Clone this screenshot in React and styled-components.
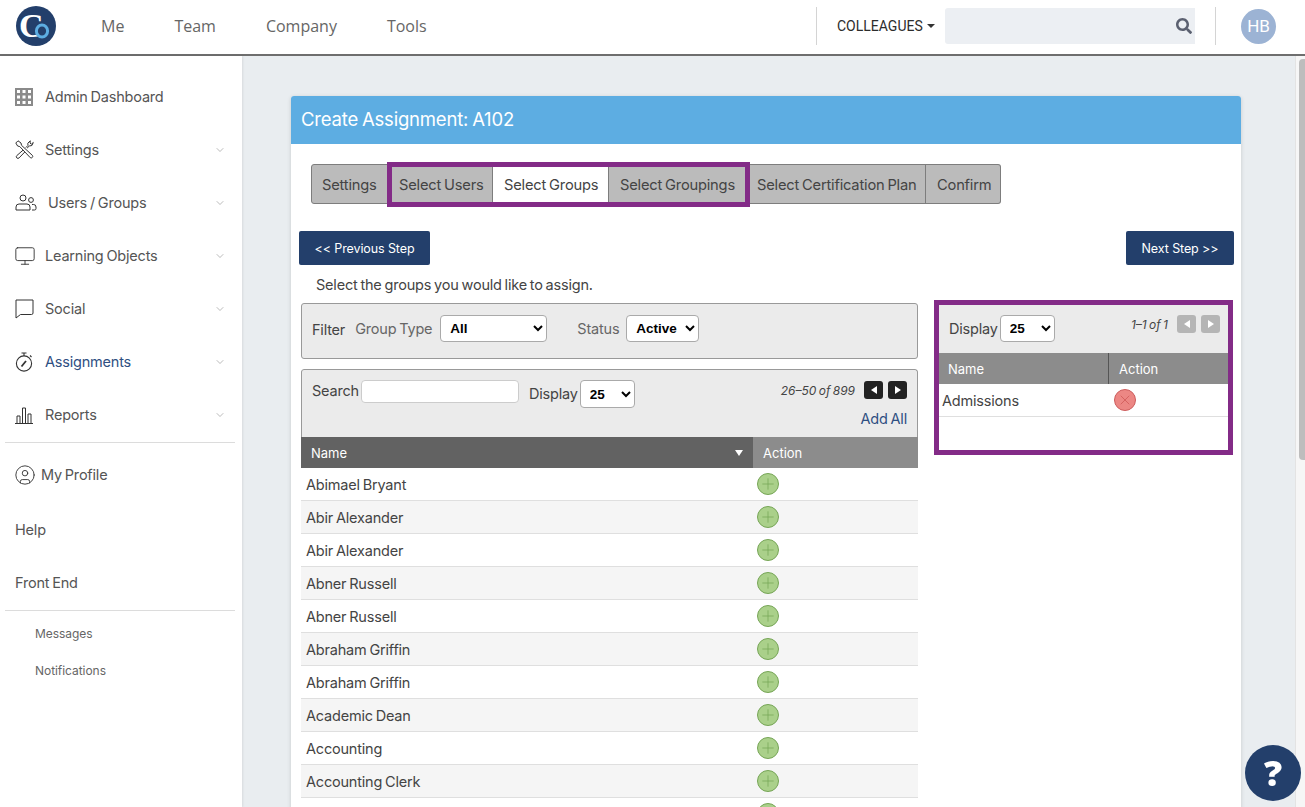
import React from "react";
import styled, { createGlobalStyle } from "styled-components";
import { ChevronDown, CircleUser, Monitor, Plus, X } from "lucide-react";
import { FaSearch } from "react-icons/fa";

const GlobalStyle = createGlobalStyle`
  html, body {
    margin: 0;
    height: 100%;
    overflow: hidden;
    font-family: "Inter", "Liberation Sans", sans-serif;
    letter-spacing: -0.2px;
    word-spacing: -1px;
    color: #333;
  }
  * { box-sizing: border-box; }
`;

const NAVY = "#233f6b";
const PURPLE = "#832b87";

const Logo = () => (
  <svg width="40" height="40" viewBox="0 0 40 40" style={{ letterSpacing: 0 }}>
    <circle cx="20" cy="20" r="20" fill={NAVY} />
    <text x="3" y="31" fontFamily="Liberation Serif" fontWeight="bold" fontSize="34" fill="#fff">C</text>
    <ellipse cx="26" cy="25" rx="5.6" ry="6" fill={NAVY} stroke="#5dade2" strokeWidth="3" />
  </svg>
);

const GridIcon = () => (
  <svg width="18" height="18" viewBox="0 0 18 18" fill="#fff">
    <rect width="18" height="18" fill="#8a8a8a" />
    {[2, 7.5, 13].flatMap((y) =>
      [2, 7.5, 13].map((x) => <rect key={`${x}-${y}`} x={x} y={y} width="3" height="3" />)
    )}
  </svg>
);

const ToolsIcon = () => (
  <svg width="19" height="19" viewBox="0 0 19 19" fill="none" stroke="#333" strokeWidth="1">
    <path d="M.8 3 3 .8 6 3l.5 2.3 11 10.2a1.6 1.6 0 0 1-2.2 2.2L4.8 6.6 2.6 6Z" />
    <path d="M8 10.2 1.8 15.6a1.6 1.6 0 0 0 2.3 2.3L9.8 12" />
    <path d="M10.8 7.6 13 5.4l-.2-2.2L15.3.8 15 3l1.3 1.2 2-1.7-1.4 3-2.6.5-2.2 2.1" />
  </svg>
);

const UsersIcon = () => (
  <svg width="22" height="18" viewBox="0 0 22 18" fill="none" stroke="#333" strokeWidth="1">
    <circle cx="8" cy="4" r="3" />
    <circle cx="16" cy="6" r="2.4" />
    <path d="M1 16v-3a3 3 0 0 1 3-3h8a3 3 0 0 1 3 3v3Z" />
    <path d="M17 10.5h1.5a2.5 2.5 0 0 1 2.5 2.5v1.5a1.5 1.5 0 0 1-1.5 1.5H17" />
  </svg>
);

const BubbleIcon = () => (
  <svg width="19" height="20" viewBox="0 0 19 20" fill="none" stroke="#333" strokeWidth="1">
    <path d="M1 1h17v13a1.5 1.5 0 0 1-1.5 1.5H5.5L1 19Z" />
  </svg>
);

const TimerIcon = () => (
  <svg width="19" height="20" viewBox="0 0 19 20" fill="none" stroke="#333" strokeWidth="1.1">
    <circle cx="9" cy="11.5" r="7.6" />
    <path d="M6.5 1h5M9 1v3M15 3.5l1.5 1.5" />
    <path d="M6.5 14.5 11 9" strokeWidth="1.8" />
  </svg>
);

const BarsIcon = () => (
  <svg width="18" height="18" viewBox="0 0 18 18" fill="none" stroke="#333" strokeWidth="1">
    <path d="M0 17.5h18M2 17V10h3v7M7.5 17V2h3v15M13 17V8h3v9" />
  </svg>
);

const Page = styled.div`
  height: 100vh;
  display: flex;
  flex-direction: column;
  background: #e9edf0;
`;

const TopBar = styled.header`
  height: 56px;
  flex: none;
  display: flex;
  align-items: center;
  background: #fff;
  border-bottom: 2px solid #6e6e6e;
  padding: 0 29px 2px 16px;
`;

const TopNav = styled.nav`
  display: flex;
  gap: 50px;
  margin-left: 45px;
  flex: 1;
`;

const TopLink = styled.a`
  font-family: "Open Sans", sans-serif;
  font-size: 16px;
  letter-spacing: 0;
  word-spacing: 0;
  color: #666;
`;

const Divider = styled.div`
  width: 1px;
  height: 38px;
  background: #d4d4d4;
`;

const Colleagues = styled.div`
  display: flex;
  align-items: center;
  gap: 4px;
  width: 128px;
  padding-left: 20px;
  font-family: "Roboto", sans-serif;
  font-size: 14px;
  letter-spacing: 0;
  color: #2c2c2c;
`;

const Caret = styled.span`
  width: 0;
  height: 0;
  border-left: 4px solid transparent;
  border-right: 4px solid transparent;
  border-top: 4px solid #333;
`;

const SearchBox = styled.div`
  width: 250px;
  height: 36px;
  display: flex;
  align-items: center;
  justify-content: flex-end;
  padding-right: 3px;
  margin-right: 20px;
  background: #eceff3;
  border-radius: 3px 0 0 3px;
  color: #5b6070;
  font-size: 16px;
`;

const Avatar = styled.div`
  width: 35px;
  height: 35px;
  margin-left: 25px;
  border-radius: 50%;
  display: flex;
  align-items: center;
  justify-content: center;
  background: #9cb3d4;
  color: #fff;
  font-family: "Roboto", sans-serif;
  font-size: 17px;
  letter-spacing: 0;
`;

const Body = styled.div`
  flex: 1;
  min-height: 0;
  display: flex;
`;

const Sidebar = styled.aside`
  width: 242px;
  flex: none;
  padding: 14px 7px 0 5px;
  background: #fff;
  box-shadow: 1px 0 2px rgba(0, 0, 0, 0.08);
`;

const SideItem = styled.a`
  height: 53px;
  display: flex;
  align-items: center;
  padding: 0 9px 0 10px;
  font-size: 14.5px;
  color: ${(p) => (p.$active ? "#2f4f82" : "#555")};
`;

const SideIcon = styled.span`
  width: ${(p) => p.$w || 30}px;
  display: flex;
  align-items: center;
  margin-left: ${(p) => p.$ml || 0}px;
`;

const SideLabel = styled.span`
  flex: 1;
`;

const SideRule = styled.hr`
  margin: 1px 0 0;
  border: 0;
  border-top: 1px solid #dcdcdc;
`;

const SideSmall = styled.a`
  height: 37px;
  display: flex;
  align-items: center;
  padding-left: 30px;
  font-size: 12px;
  color: #666;
  letter-spacing: -0.05px;
`;

const Main = styled.main`
  flex: 1;
  min-width: 0;
  overflow: hidden;
  padding: 40px 54px 0 49px;
`;

const Card = styled.section`
  background: #fff;
  border-radius: 3px 3px 0 0;
  box-shadow: 0 1px 4px rgba(0, 0, 0, 0.15);
`;

const CardHead = styled.h1`
  height: 48px;
  margin: 0;
  padding: 0 0 2px 10px;
  display: flex;
  align-items: center;
  background: #5dade2;
  border-radius: 3px 3px 0 0;
  color: #fff;
  font-size: 18.5px;
  font-weight: 400;
`;

const CardBody = styled.div`
  padding: 20px 7px 0 8px;
`;

const Tabs = styled.div`
  display: flex;
  width: fit-content;
  margin-left: 12px;
  height: 40px;
`;

const Tab = styled.a`
  display: flex;
  align-items: center;
  width: ${(p) => p.$w}px;
  padding: 2px 0 0 ${(p) => p.$pad || 11}px;
  font-size: 14.7px;
  color: #444;
  white-space: nowrap;
  background: ${(p) => (p.$current ? "#fff" : "#bbb")};
  border: 1px solid #7d7d7d;
  border-left-width: ${(p) => (p.$first ? 1 : 0)}px;
  border-radius: ${(p) => p.$radius || 0};
`;

const TabHighlight = styled.div`
  position: relative;
  display: flex;

  &::after {
    content: "";
    position: absolute;
    left: -1px;
    right: -1px;
    top: -2px;
    bottom: -3px;
    border: 5px solid ${PURPLE};
    pointer-events: none;
  }
`;

const StepRow = styled.div`
  display: flex;
  justify-content: space-between;
  margin-top: 27px;
`;

const StepButton = styled.button`
  height: 34px;
  width: ${(p) => p.$w}px;
  border: 0;
  border-radius: 2px;
  background: ${NAVY};
  color: #fff;
  font-family: inherit;
  font-size: 12.5px;
  letter-spacing: -0.1px;
`;

const Columns = styled.div`
  display: flex;
  margin-top: 11px;
  margin-left: 2px;
  gap: 16px;
  align-items: flex-start;
`;

const LeftColumn = styled.div`
  width: 617px;
  flex: none;
`;

const Intro = styled.p`
  margin: 0 0 9px 15px;
  height: 18px;
  line-height: 18px;
  font-size: 14.5px;
  color: #444;
`;

const FilterBar = styled.div`
  height: 56px;
  display: flex;
  align-items: flex-start;
  padding: 11px 10px 0;
  background: #ebebeb;
  border: 1px solid #999;
  border-radius: 3px;
`;

const FilterLabel = styled.span`
  font-size: 14.5px;
  line-height: 28px;
  color: ${(p) => (p.$muted ? "#666" : "#444")};
  margin-top: ${(p) => (p.$low ? 1 : 0)}px;
  margin-right: ${(p) => p.$gap}px;
`;

const Select = styled.select`
  height: ${(p) => p.$h || 27}px;
  width: ${(p) => p.$w}px;
  padding-left: 5px;
  background: #fff;
  border: 1px solid #aaa;
  border-radius: 4px;
  color: #000;
  font-family: "Liberation Sans", sans-serif;
  font-size: 13.5px;
  font-weight: 700;
  letter-spacing: 0;
`;

const TableBox = styled.div`
  margin-top: 10px;
  border-radius: 3px 3px 0 0;
  overflow: hidden;
`;

const Toolbar = styled.div`
  display: flex;
  justify-content: space-between;
  background: #ebebeb;
  height: ${(p) => p.$h}px;
  padding: ${(p) => p.$pad};
  border: ${(p) => (p.$bordered ? "1px solid #999" : "0")};
  border-bottom: 0;
  border-radius: ${(p) => (p.$bordered ? "3px 3px 0 0" : "0")};
`;

const ToolGroup = styled.div`
  display: flex;
  align-items: flex-start;
`;

const ToolLabel = styled.span`
  font-size: 14.5px;
  color: #444;
  line-height: ${(p) => p.$lh || 22}px;
  margin-right: 2px;
`;

const SearchInput = styled.input`
  width: 158px;
  height: 23px;
  margin-right: 10px;
  background: #fff;
  border: 1px solid #ccc;
  border-radius: 4px;
`;

const PagerColumn = styled.div`
  display: flex;
  flex-direction: column;
  align-items: flex-end;
`;

const Pager = styled.div`
  display: flex;
  align-items: center;
`;

const PageCount = styled.em`
  font-size: 12px;
  letter-spacing: 0;
  color: #444;
  margin-right: 9px;
`;

const PageButton = styled.span`
  width: 19px;
  height: 18px;
  margin-left: ${(p) => (p.$next ? 5 : 0)}px;
  display: flex;
  align-items: center;
  justify-content: center;
  background: ${(p) => (p.$dim ? "#b5b5b5" : "#222")};
  border-radius: 3px;

  &::before {
    content: "";
    border-top: 4px solid transparent;
    border-bottom: 4px solid transparent;
    border-left: ${(p) => (p.$next ? "6px solid #fff" : "0")};
    border-right: ${(p) => (p.$next ? "0" : "6px solid #fff")};
  }
`;

const AddAll = styled.a`
  margin-top: 11px;
  font-size: 14.5px;
  color: #2f4f82;
`;

const HeadRow = styled.div`
  display: grid;
  grid-template-columns: ${(p) => p.$cols};
  height: 31px;
`;

const HeadCell = styled.div`
  display: flex;
  align-items: center;
  justify-content: space-between;
  padding: 0 10px 0 ${(p) => p.$pl || 10}px;
  background: ${(p) => (p.$sorted ? "#626262" : "#8c8c8c")};
  color: #fff;
  font-size: 13px;
  letter-spacing: 0;
  border-left: ${(p) => (p.$rule ? "1px solid #555" : "0")};
`;

const SortArrow = styled.span`
  margin-right: 0;
  border-left: 4px solid transparent;
  border-right: 4px solid transparent;
  border-top: 6px solid #fff;
`;

const Row = styled.div`
  display: grid;
  grid-template-columns: ${(p) => p.$cols};
  height: 33px;
  align-items: center;
  background: ${(p) => (p.$alt ? "#f5f5f5" : "#fff")};
  border-bottom: 1px solid #dfdfdf;
`;

const RowName = styled.span`
  padding-left: ${(p) => p.$pl || 5}px;
  font-size: 14.5px;
  color: #444;
  white-space: nowrap;
`;

const RoundAction = styled.button`
  width: 22px;
  height: 22px;
  margin: 0 0 0 ${(p) => p.$ml}px;
  padding: 0;
  display: flex;
  align-items: center;
  justify-content: center;
  border-radius: 50%;
  background: ${(p) => (p.$remove ? "#ec8784" : "#aad08a")};
  border: 1px solid ${(p) => (p.$remove ? "#cc5c5c" : "#76a556")};
  color: ${(p) => (p.$remove ? "#c9504e" : "#76a556")};
`;

const RightPanel = styled.div`
  width: 299px;
  height: 155px;
  margin-top: 24px;
  border: 5px solid ${PURPLE};
  background: #fff;
`;

const Scrollbar = styled.div`
  width: 10px;
  flex: none;
  padding: 3px 0 0 3px;
  background: #f6f6f6;
  border-left: 1px solid #e3e3e3;
`;

const ScrollThumb = styled.div`
  height: 401px;
  background: #bdbdbd;
  border-radius: 4px 0 0 4px;
`;

const HelpButton = styled.button`
  position: fixed;
  right: 4px;
  bottom: 6px;
  width: 56px;
  height: 56px;
  padding: 0;
  border: 0;
  border-radius: 50%;
  background: ${NAVY};
  color: #fff;
  font-family: "Open Sans", sans-serif;
  font-size: 36px;
  font-weight: 800;
  letter-spacing: 0;
  line-height: 56px;
`;

const sideItems = [
  { label: "Admin Dashboard", icon: <GridIcon /> },
  { label: "Settings", icon: <ToolsIcon />, more: true },
  { label: "Users / Groups", icon: <UsersIcon />, more: true, w: 33 },
  { label: "Learning Objects", icon: <Monitor size={22} strokeWidth={1} color="#333" />, more: true, w: 31, ml: -1 },
  { label: "Social", icon: <BubbleIcon />, more: true },
  { label: "Assignments", icon: <TimerIcon />, more: true, active: true },
  { label: "Reports", icon: <BarsIcon />, more: true },
];

const names = [
  "Abimael Bryant",
  "Abir Alexander",
  "Abir Alexander",
  "Abner Russell",
  "Abner Russell",
  "Abraham Griffin",
  "Abraham Griffin",
  "Academic Dean",
  "Accounting",
  "Accounting Clerk",
  "",
];

export default function App() {
  return (
    <Page>
      <GlobalStyle />
      <TopBar>
        <Logo />
        <TopNav>
          <TopLink>Me</TopLink>
          <TopLink>Team</TopLink>
          <TopLink>Company</TopLink>
          <TopLink>Tools</TopLink>
        </TopNav>
        <Divider />
        <Colleagues>
          COLLEAGUES <Caret />
        </Colleagues>
        <SearchBox>
          <FaSearch />
        </SearchBox>
        <Divider />
        <Avatar>HB</Avatar>
      </TopBar>

      <Body>
        <Sidebar>
          {sideItems.map((item) => (
            <SideItem key={item.label} $active={item.active}>
              <SideIcon $w={item.w} $ml={item.ml}>{item.icon}</SideIcon>
              <SideLabel>{item.label}</SideLabel>
              {item.more && <ChevronDown size={12} strokeWidth={1} color="#777" />}
            </SideItem>
          ))}
          <SideRule />
          <SideItem style={{ marginTop: 5 }}>
            <SideIcon $w={27} $ml={-1}>
              <CircleUser size={22} strokeWidth={1} color="#333" />
            </SideIcon>
            <SideLabel>My Profile</SideLabel>
          </SideItem>
          <SideItem style={{ marginTop: 2 }}>
            <SideLabel>Help</SideLabel>
          </SideItem>
          <SideItem>
            <SideLabel>Front End</SideLabel>
          </SideItem>
          <SideRule />
          <SideSmall style={{ marginTop: 4 }}>Messages</SideSmall>
          <SideSmall>Notifications</SideSmall>
        </Sidebar>

        <Main>
          <Card>
            <CardHead>Create Assignment: A102</CardHead>
            <CardBody>
              <Tabs>
                <Tab $first $w={77} $pad={10} $radius="3px 0 0 3px">Settings</Tab>
                <TabHighlight>
                  <Tab $w={105}>Select Users</Tab>
                  <Tab $w={116} $current>Select Groups</Tab>
                  <Tab $w={140}>Select Groupings</Tab>
                </TabHighlight>
                <Tab $w={177} $pad={8}>Select Certification Plan</Tab>
                <Tab $w={75} $radius="0 3px 3px 0">Confirm</Tab>
              </Tabs>

              <StepRow>
                <StepButton $w={131}>&lt;&lt; Previous Step</StepButton>
                <StepButton $w={108}>Next Step &gt;&gt;</StepButton>
              </StepRow>

              <Columns>
                <LeftColumn>
                  <Intro>Select the groups you would like to assign.</Intro>
                  <FilterBar>
                    <FilterLabel $low $gap={10}>Filter</FilterLabel>
                    <FilterLabel $muted $gap={8}>Group Type</FilterLabel>
                    <Select $w={107} defaultValue="All">
                      <option>All</option>
                    </Select>
                    <FilterLabel $muted $gap={7} style={{ marginLeft: 30 }}>Status</FilterLabel>
                    <Select $w={73} defaultValue="Active">
                      <option>Active</option>
                    </Select>
                  </FilterBar>

                  <TableBox>
                    <Toolbar $bordered $h={68} $pad="10px 10px 0">
                      <ToolGroup>
                        <ToolLabel>Search</ToolLabel>
                        <SearchInput />
                        <ToolLabel $lh={28}>Display</ToolLabel>
                        <Select $w={55} $h={28} defaultValue="25">
                          <option>25</option>
                        </Select>
                      </ToolGroup>
                      <PagerColumn>
                        <Pager style={{ marginTop: 1 }}>
                          <PageCount>26–50 of 899</PageCount>
                          <PageButton />
                          <PageButton $next />
                        </Pager>
                        <AddAll>Add All</AddAll>
                      </PagerColumn>
                    </Toolbar>
                    <HeadRow $cols="452px 165px">
                      <HeadCell $sorted>
                        Name <SortArrow />
                      </HeadCell>
                      <HeadCell>Action</HeadCell>
                    </HeadRow>
                    {names.map((name, i) => (
                      <Row key={i} $cols="452px 165px" $alt={i % 2 === 1}>
                        <RowName>{name}</RowName>
                        <RoundAction $ml={4}>
                          <Plus size={18} strokeWidth={1} />
                        </RoundAction>
                      </Row>
                    ))}
                  </TableBox>
                </LeftColumn>

                <RightPanel>
                  <Toolbar $h={48} $pad="10px 8px 0 10px">
                    <ToolGroup>
                      <ToolLabel $lh={27}>Display</ToolLabel>
                      <Select $w={55} defaultValue="25">
                        <option>25</option>
                      </Select>
                    </ToolGroup>
                    <Pager style={{ height: 18 }}>
                      <PageCount>1–1 of 1</PageCount>
                      <PageButton $dim />
                      <PageButton $dim $next />
                    </Pager>
                  </Toolbar>
                  <HeadRow $cols="169px 120px">
                    <HeadCell $pl={9}>Name</HeadCell>
                    <HeadCell $rule>Action</HeadCell>
                  </HeadRow>
                  <Row $cols="169px 120px">
                    <RowName $pl={3}>Admissions</RowName>
                    <RoundAction $ml={6} $remove>
                      <X size={16} strokeWidth={1} />
                    </RoundAction>
                  </Row>
                </RightPanel>
              </Columns>
            </CardBody>
          </Card>
        </Main>

        <Scrollbar>
          <ScrollThumb />
        </Scrollbar>
      </Body>

      <HelpButton>?</HelpButton>
    </Page>
  );
}
